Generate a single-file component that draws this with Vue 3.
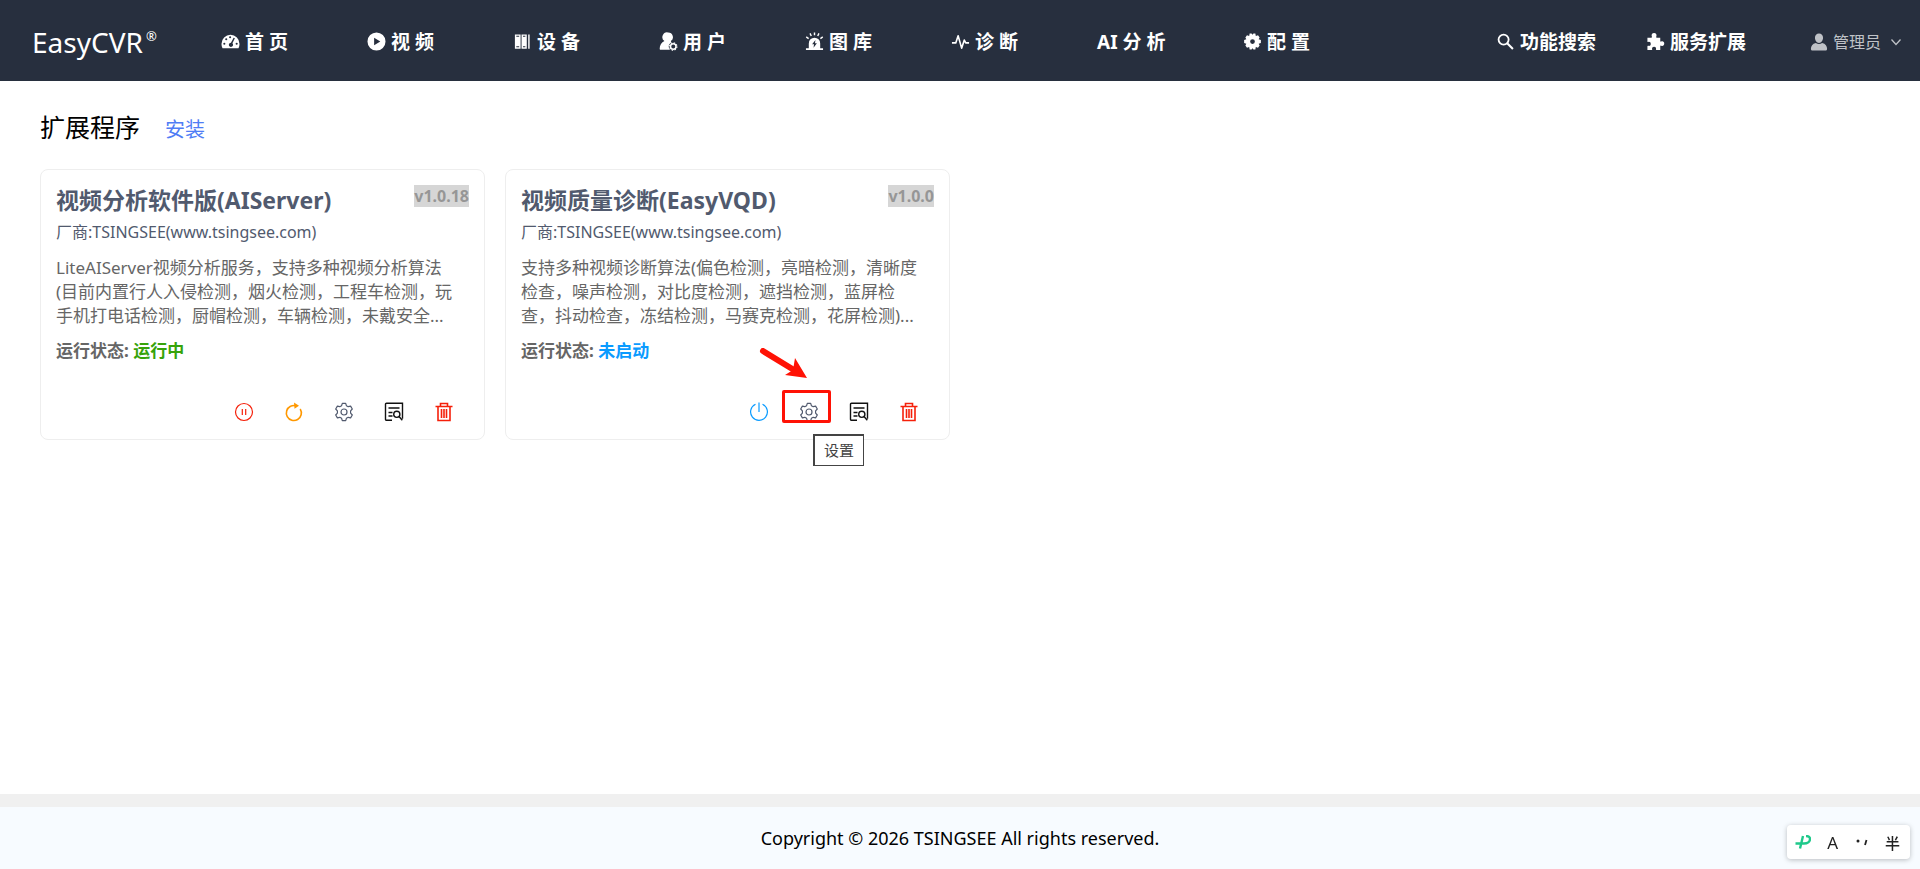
<script setup>
import { ref } from 'vue'

const menus = [
    { name: '首 页', icon: 'home' },
    { name: '视 频', icon: 'play' },
    { name: '设 备', icon: 'device' },
    { name: '用 户', icon: 'user' },
    { name: '图 库', icon: 'alarm' },
    { name: '诊 断', icon: 'pulse' },
    { name: 'AI 分 析' },
    { name: '配 置', icon: 'config' }
]

const plugins = ref([
    {
        id: 1,
        name: '视频分析软件版(AIServer)',
        version: 'v1.0.18',
        vendor: 'TSINGSEE(www.tsingsee.com)',
        desc: 'LiteAIServer视频分析服务，支持多种视频分析算法\n(目前内置行人入侵检测，烟火检测，工程车检测，玩\n手机打电话检测，厨帽检测，车辆检测，未戴安全...',
        running: true
    },
    {
        id: 2,
        name: '视频质量诊断(EasyVQD)',
        version: 'v1.0.0',
        vendor: 'TSINGSEE(www.tsingsee.com)',
        desc: '支持多种视频诊断算法(偏色检测，亮暗检测，清晰度\n检查，噪声检测，对比度检测，遮挡检测，蓝屏检\n查，抖动检查，冻结检测，马赛克检测，花屏检测)...',
        running: false
    }
])

const tipId = ref(2)

function actionsOf(item) {
    const common = [
        { icon: 'setting', title: '设置' },
        { icon: 'log', title: '日志' },
        { icon: 'trash', title: '删除' }
    ]
    return item.running
        ? [{ icon: 'pause', title: '停止' }, { icon: 'restart', title: '重启' }, ...common]
        : [{ icon: 'power', title: '启动' }, ...common]
}
</script>

<template>
    <svg class="sprite" aria-hidden="true">
        <symbol id="i-home" viewBox="0 0 20 20">
            <path fill="currentColor" fill-rule="evenodd"
                d="M10 3a9.5 9.5 0 0 0-9.5 9.5c0 1.8.4 3.2 1.1 4.5h16.8c.7-1.300 1.100-2.700 1.100-4.500A9.500 9.500 0 0 0 10 3zM3.500 11.200a1.100 1.100 0 1 1 0 2.200 1.100 1.100 0 0 1 0-2.200zM5.500 6.500a1.100 1.100 0 1 1 0 2.200 1.100 1.100 0 0 1 0-2.200zM9.600 4.500a1.100 1.100 0 1 1 0 2.200 1.100 1.100 0 0 1 0-2.200zM16.500 11.200a1.100 1.100 0 1 1 0 2.200 1.100 1.100 0 0 1 0-2.200zM13.300 6l1.300.7-2.600 5.200a2.200 2.200 0 1 1-1.500-.6z" />
        </symbol>
        <symbol id="i-play" viewBox="0 0 20 20">
            <path fill="currentColor" fill-rule="evenodd"
                d="M10 .5a9.500 9.500 0 1 0 0 19 9.500 9.500 0 0 0 0-19zM7.500 6v8l6.500-4z" />
        </symbol>
        <symbol id="i-device" viewBox="0 0 20 20">
            <path fill="currentColor" fill-rule="evenodd"
                d="M2 2.500h6v15H2zM3.500 4v1h3V4zM3.500 15v1h3v-1zM9 2.500h5.500v15H9zM10.500 4v1h2.500V4zM10.500 15v1h2.500v-1zM16 2.500h1.500v15H16z" />
        </symbol>
        <symbol id="i-user" viewBox="0 0 20 20">
            <path fill="currentColor"
                d="M9.500.5a5 5 0 0 1 3 9.100l.5 1.400c-2 1-3 2.800-2.700 4.800.1 1.200.6 2.200 1.300 3H2a1.300 1.300 0 0 1-1.300-1.300c0-3.600 2-6.700 5-8A5 5 0 0 1 9.500.5z" />
            <circle cx="15" cy="15.300" r="2.900" fill="none" stroke="currentColor" stroke-width="1.600" />
            <circle cx="15" cy="15.300" r="3.900" fill="none" stroke="currentColor" stroke-width="1.200"
                stroke-dasharray="1.500 1.560" />
        </symbol>
        <symbol id="i-alarm" viewBox="0 0 20 20">
            <path fill="currentColor" fill-rule="evenodd"
                d="M4 17v-5a6 6 0 0 1 12 0v5h3v2H1v-2zM11 8.500L7.500 13h2L9 16.500l3.500-4.700h-2z" />
            <path fill="none" stroke="currentColor" stroke-width="1.500"
                d="M10 .5v3M5.300 1.500l1.300 2.700M14.700 1.500l-1.300 2.700M1.300 5.200l2.500 1.800M18.700 5.200L16.200 7" />
        </symbol>
        <symbol id="i-pulse" viewBox="0 0 20 20">
            <path fill="none" stroke="currentColor" stroke-width="1.700" stroke-linejoin="round"
                d="M1 11.500h4L7.500 4l3.700 13L14 8.500l1.500 3H19" />
        </symbol>
        <symbol id="i-config" viewBox="0 0 20 20">
            <path fill="currentColor" fill-rule="evenodd"
                d="M7 1.500h2L10 3l1-1.500h2l.5 2.800 2.300-.8 1.700 2.200-1 2 2.300.8v3l-2.300.8 1 2-1.700 2.200-2.300-.8-.5 2.800h-2L10 17l-1 1.500H7l-.5-2.800-2.300.8-1.700-2.200 1-2-2.300-.8v-3l2.300-.8-1-2 1.700-2.200 2.300.8zM10 7.500a2.500 2.500 0 1 0 0 5 2.500 2.500 0 0 0 0-5z" />
        </symbol>
        <symbol id="i-search" viewBox="0 0 20 20">
            <circle cx="8" cy="8" r="5.300" fill="none" stroke="currentColor" stroke-width="1.900" />
            <path fill="none" stroke="currentColor" stroke-width="2.200" d="M11.800 11.800l6 6" />
        </symbol>
        <symbol id="i-puzzle" viewBox="0 0 20 20">
            <path fill="currentColor"
                d="M1.500 6h4.200c.5 0 .7-.5.5-1C5.300 2.800 6.500 1 8.500 1s3.200 1.800 2.300 4c-.2.500 0 1 .5 1h3.700v3.500c0 .6.500.8 1 .6 1.700-.8 3.200.3 3.200 2.100s-1.500 3-3.200 2.200c-.5-.2-1 0-1 .6V19h-4c-.5 0-.7-.4-.5-.9.500-1.600-.4-2.700-2-2.700s-2.500 1.100-2 2.700c.2.500 0 .9-.5.900H1.500v-4c0-.5.400-.7.900-.5 1.600.5 2.600-.6 2.600-2s-1-2.500-2.600-2c-.5.200-.9 0-.9-.5z" />
        </symbol>
        <symbol id="i-avatar" viewBox="0 0 20 20">
            <path fill="currentColor"
                d="M10 .5c2.700 0 4.500 2 4.500 4.800S12.600 11 10 11 5.500 8.100 5.500 5.300 7.300.5 10 .5zM6.500 11c2 1.700 5 1.700 7 0 3.800.8 5.500 3.500 5.500 6.500 0 1.200-.6 2-1.700 2H2.700c-1.100 0-1.700-.8-1.700-2 0-3 1.700-5.700 5.500-6.500z" />
        </symbol>
        <symbol id="i-pause" viewBox="0 0 20 20">
            <g fill="none" stroke="currentColor" stroke-width="1.200">
                <circle cx="10" cy="10" r="8.500" />
                <path d="M8.300 7v6M11.700 7v6" />
            </g>
        </symbol>
        <symbol id="i-restart" viewBox="0 0 20 20">
            <path fill="none" stroke="currentColor" stroke-width="1.600"
                d="M6.500 4.300a7.500 7.500 0 1 0 9.700 2.700M6.300 4.400c1.800-1 3.700-1.100 5.700-.8" />
            <path fill="currentColor" d="M10 .5l5 3.300-4.500 3z" />
        </symbol>
        <symbol id="i-setting" viewBox="0 0 20 20">
            <g fill="none" stroke="currentColor" stroke-width="1.200" stroke-linejoin="round">
                <path
                    d="M8.300 1.300h3.400l.7 2.400 1.800 1 2.400-.6 1.700 2.900-1.700 1.900v2.200l1.700 1.900-1.700 2.900-2.400-.6-1.800 1-.7 2.400H8.300l-.7-2.400-1.800-1-2.400.6L1.700 13l1.700-1.900V8.900L1.700 7l1.700-2.900 2.400.6 1.800-1z" />
                <circle cx="10" cy="10" r="3" />
            </g>
        </symbol>
        <symbol id="i-log" viewBox="0 0 20 20">
            <g fill="none" stroke="currentColor" stroke-width="1.400">
                <path d="M8 18.300H2.500a1 1 0 0 1-1-1v-15a1 1 0 0 1 1-1h16v15.500M4.500 6h11M4.500 10.500h4M4.500 14h4" />
                <circle cx="12.800" cy="12.300" r="3.100" />
                <path d="M15 14.500l3.300 3.800" />
            </g>
        </symbol>
        <symbol id="i-trash" viewBox="0 0 20 20">
            <path fill="none" stroke="currentColor" stroke-width="1.600"
                d="M1.500 4.500h17M6.500 4.500V1.500h7v3M4 4.500v14h12v-14M7.500 7v9M10 7v9M12.500 7v9" />
        </symbol>
        <symbol id="i-power" viewBox="0 0 20 20">
            <path fill="none" stroke="currentColor" stroke-width="1.200"
                d="M10 .5V10M6.500 2.300a8.400 8.400 0 1 0 7 0" />
        </symbol>
    </svg>

    <div class="page">
        <header class="header">
            <a class="logo" href="#">EasyCVR<sup>®</sup></a>
            <nav class="menu">
                <a v-for="m in menus" :key="m.name" href="#" class="menu-item">
                    <svg v-if="m.icon" class="menu-icon"><use :href="'#i-' + m.icon" /></svg>
                    <span>{{ m.name }}</span>
                </a>
            </nav>
            <div class="tools">
                <a href="#" class="tool"><svg class="tool-icon"><use href="#i-search" /></svg>功能搜索</a>
                <a href="#" class="tool"><svg class="tool-icon"><use href="#i-puzzle" /></svg>服务扩展</a>
                <button type="button" class="account">
                    <svg class="avatar"><use href="#i-avatar" /></svg>
                    <span>管理员</span>
                    <svg class="caret" viewBox="0 0 12 12">
                        <path d="M1.500 3.500L6 8.500l4.500-5" fill="none" stroke="currentColor" stroke-width="1.300" />
                    </svg>
                </button>
            </div>
        </header>

        <main class="content">
            <div class="title-row">
                <h1>扩展程序</h1>
                <a href="#">安装</a>
            </div>
            <div class="cards">
                <section v-for="item in plugins" :key="item.id" class="card">
                    <div class="card-head">
                        <h2>{{ item.name }}</h2>
                        <span class="version">{{ item.version }}</span>
                    </div>
                    <p class="vendor">厂商:{{ item.vendor }}</p>
                    <p class="desc">{{ item.desc }}</p>
                    <p class="status">
                        运行状态:
                        <span :class="item.running ? 'on' : 'off'">{{ item.running ? '运行中' : '未启动' }}</span>
                    </p>
                    <div class="actions">
                        <div v-for="a in actionsOf(item)" :key="a.icon" class="action">
                            <button type="button" :class="a.icon" :aria-label="a.title">
                                <svg><use :href="'#i-' + a.icon" /></svg>
                            </button>
                            <template v-if="tipId === item.id && a.icon === 'setting'">
                                <svg class="arrow" viewBox="0 0 50 32">
                                    <path d="M4 3l31 19" stroke="#ff1205" stroke-width="6" stroke-linecap="round" />
                                    <path d="M36 10l12 20-22-3 8-5z" fill="#ff1205" />
                                </svg>
                                <span class="mark"></span>
                                <span class="tip">{{ a.title }}</span>
                            </template>
                        </div>
                    </div>
                </section>
            </div>
        </main>

        <footer class="footer">Copyright © 2026 TSINGSEE All rights reserved.</footer>

        <div class="ime">
            <svg class="ime-logo" viewBox="0 0 16 14">
                <path d="M.5 8.500h8.500c3.500 0 6-2 6-4.500 0-2-1.500-3-4-3M8 1L5 13.500" fill="none" stroke="#1fc98b" stroke-width="2.400" />
            </svg>
            <span>A</span>
            <svg class="ime-punct" viewBox="0 0 14 10">
                <circle cx="3" cy="4" r="1.500" fill="#222" />
                <path d="M11.500 3L10 8" stroke="#222" stroke-width="1.800" />
            </svg>
            <span class="half">半</span>
        </div>
    </div>
</template>

<style>
body {
    margin: 0;
}
</style>

<style scoped>
.sprite {
    position: absolute;
    width: 0;
    height: 0;
}

.page {
    display: flex;
    flex-direction: column;
    min-height: 100vh;
    background: #fff;
    color: #000;
    font-family: "Noto Sans", "Noto Sans CJK SC", sans-serif;
}

a {
    text-decoration: none;
}

h1,
h2,
p {
    margin: 0;
}

button {
    padding: 0;
    border: 0;
    background: none;
    font-family: inherit;
    cursor: pointer;
}

.header {
    display: flex;
    align-items: center;
    box-sizing: border-box;
    height: 81px;
    padding: 2px 18px 0 32px;
    background: #272f3e;
}

.logo {
    flex: none;
    width: 189px;
    color: #fff;
    font-size: 28px;
    line-height: 42px;
}

.logo sup {
    margin-left: 3px;
    font-size: 13px;
    line-height: 0;
    vertical-align: 12px;
}

.menu {
    display: flex;
}

.menu-item {
    display: flex;
    align-items: center;
    gap: 5px;
    width: 146px;
    color: #fff;
    font-size: 19px;
    font-weight: bold;
    line-height: 28px;
    white-space: nowrap;
}

.menu-icon {
    width: 19px;
    height: 19px;
}

.tools {
    display: flex;
    align-items: center;
    margin-left: auto;
}

.tool {
    display: flex;
    align-items: center;
    gap: 5px;
    margin-right: 50px;
    color: #fff;
    font-size: 19px;
    font-weight: bold;
    line-height: 28px;
    white-space: nowrap;
}

.tool-icon {
    width: 19px;
    height: 19px;
}

.account {
    display: flex;
    align-items: center;
    margin-left: 14px;
    color: #bfc2c7;
    font-size: 16px;
    line-height: 24px;
}

.avatar {
    width: 18px;
    height: 18px;
    margin-right: 5px;
}

.caret {
    width: 12px;
    height: 12px;
    margin-left: 9px;
}

.content {
    flex: 1;
    padding: 26px 40px 40px;
}

.title-row {
    display: flex;
    align-items: baseline;
    gap: 25px;
    margin-bottom: 19px;
    line-height: 40px;
}

h1 {
    font-size: 25px;
    font-weight: normal;
}

.title-row a {
    color: #4f7df5;
    font-size: 20px;
}

.cards {
    display: grid;
    grid-template-columns: repeat(4, 1fr);
    gap: 20px;
}

.card {
    box-sizing: border-box;
    padding: 15px 15px 11px;
    border: 1px solid #eee;
    border-radius: 8px;
}

.card-head {
    display: flex;
    justify-content: space-between;
    align-items: flex-start;
}

h2 {
    color: #515a6e;
    font-size: 23px;
    line-height: 30px;
    white-space: nowrap;
}

.version {
    background: #d6d6d6;
    color: #969696;
    font-size: 16px;
    font-weight: bold;
    line-height: 22px;
}

.vendor {
    color: #515a6e;
    font-size: 16px;
    line-height: 34px;
}

.desc {
    margin-top: 7px;
    color: #666;
    font-size: 17px;
    line-height: 24px;
    white-space: pre;
}

.status {
    margin-top: 10px;
    color: #666;
    font-size: 17px;
    font-weight: bold;
    line-height: 26px;
}

.on {
    color: #37a30a;
}

.off {
    color: #0a9bff;
}

.actions {
    display: flex;
    justify-content: flex-end;
    margin-top: 32px;
}

.action {
    position: relative;
    width: 50px;
    height: 32px;
}

.action button {
    display: flex;
    align-items: center;
    justify-content: center;
    width: 100%;
    height: 100%;
}

.action button svg {
    width: 20px;
    height: 20px;
}

.pause,
.trash {
    color: #f5200a;
}

.restart {
    color: #ff9800;
}

.setting {
    color: #515a6e;
}

.log {
    color: #111;
}

.power {
    color: #0a9bff;
}

.arrow {
    position: absolute;
    top: -48px;
    left: -25px;
    width: 50px;
    height: 32px;
}

.mark {
    position: absolute;
    top: -6px;
    left: -2px;
    width: 43px;
    height: 27px;
    border: 3px solid #ff1205;
    border-radius: 2px;
    pointer-events: none;
}

.tip {
    position: absolute;
    top: 38px;
    left: 29px;
    padding: 0 9px;
    border: solid #444;
    border-width: 2px 1px 1px 2px;
    background: #fff;
    color: #444;
    font-size: 15px;
    line-height: 29px;
    white-space: nowrap;
}

.footer {
    padding: 16px 0;
    border-top: 13px solid #f0f0f0;
    background: #f7fbff;
    font-size: 18px;
    line-height: 30px;
    text-align: center;
}

.ime {
    position: fixed;
    right: 10px;
    bottom: 10px;
    display: flex;
    align-items: center;
    justify-content: space-between;
    box-sizing: border-box;
    width: 123px;
    height: 34px;
    padding: 0 10px 0 8px;
    border-radius: 4px;
    background: #fff;
    box-shadow: 0 1px 5px rgba(0, 0, 0, 0.25);
    color: #222;
    font-size: 17px;
}

.half {
    font-size: 15px;
    font-weight: 500;
}

.ime-logo {
    width: 16px;
    height: 14px;
}

.ime-punct {
    width: 14px;
    height: 10px;
}
</style>
